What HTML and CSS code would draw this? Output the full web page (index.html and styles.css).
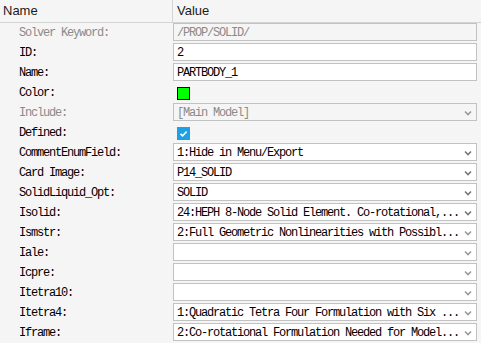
FILE: index.html
```html
<!DOCTYPE html>
<html>
<head>
  <title>Property Editor</title>
  <link rel="stylesheet" href="styles.css">
</head>
<body>
  <div class="grid">
    <div class="head">
      <div class="head-name">Name</div>
      <div class="head-value">Value</div>
    </div>

    <div class="row">
      <div class="label off">Solver Keyword:</div>
      <div class="field off">/PROP/SOLID/</div>
    </div>
    <div class="row">
      <div class="label">ID:</div>
      <div class="field">2</div>
    </div>
    <div class="row">
      <div class="label">Name:</div>
      <div class="field">PARTBODY_1</div>
    </div>
    <div class="row">
      <div class="label">Color:</div>
      <div class="plain"><span class="swatch"></span></div>
    </div>
    <div class="row">
      <div class="label off">Include:</div>
      <div class="field select off"><span>[Main Model]</span><svg class="arrow" width="8" height="6" viewBox="0 0 8 6"><path d="M1 1.5 L4 4.5 L7 1.5" fill="none" stroke="#999" stroke-width="1.6"/></svg></div>
    </div>
    <div class="row">
      <div class="label">Defined:</div>
      <div class="plain"><span class="check"><svg width="13" height="13" viewBox="0 0 13 13"><path d="M3.5 6.8 L5.6 8.8 L9.6 4.6" fill="none" stroke="#fff" stroke-width="1.6"/></svg></span></div>
    </div>
    <div class="row">
      <div class="label">CommentEnumField:</div>
      <div class="field select"><span>1:Hide in Menu/Export</span><svg class="arrow" width="8" height="6" viewBox="0 0 8 6"><path d="M1 1.5 L4 4.5 L7 1.5" fill="none" stroke="#777" stroke-width="1.6"/></svg></div>
    </div>
    <div class="row">
      <div class="label">Card Image:</div>
      <div class="field select"><span>P14_SOLID</span><svg class="arrow" width="8" height="6" viewBox="0 0 8 6"><path d="M1 1.5 L4 4.5 L7 1.5" fill="none" stroke="#777" stroke-width="1.6"/></svg></div>
    </div>
    <div class="row">
      <div class="label">SolidLiquid_Opt:</div>
      <div class="field select"><span>SOLID</span><svg class="arrow" width="8" height="6" viewBox="0 0 8 6"><path d="M1 1.5 L4 4.5 L7 1.5" fill="none" stroke="#777" stroke-width="1.6"/></svg></div>
    </div>
    <div class="row">
      <div class="label">Isolid:</div>
      <div class="field select"><span>24:HEPH 8-Node Solid Element. Co-rotational,...</span><svg class="arrow" width="8" height="6" viewBox="0 0 8 6"><path d="M1 1.5 L4 4.5 L7 1.5" fill="none" stroke="#777" stroke-width="1.6"/></svg></div>
    </div>
    <div class="row">
      <div class="label">Ismstr:</div>
      <div class="field select"><span>2:Full Geometric Nonlinearities with Possibl...</span><svg class="arrow" width="8" height="6" viewBox="0 0 8 6"><path d="M1 1.5 L4 4.5 L7 1.5" fill="none" stroke="#999" stroke-width="1.6"/></svg></div>
    </div>
    <div class="row">
      <div class="label">Iale:</div>
      <div class="field select"><span></span><svg class="arrow" width="8" height="6" viewBox="0 0 8 6"><path d="M1 1.5 L4 4.5 L7 1.5" fill="none" stroke="#999" stroke-width="1.6"/></svg></div>
    </div>
    <div class="row">
      <div class="label">Icpre:</div>
      <div class="field select"><span></span><svg class="arrow" width="8" height="6" viewBox="0 0 8 6"><path d="M1 1.5 L4 4.5 L7 1.5" fill="none" stroke="#999" stroke-width="1.6"/></svg></div>
    </div>
    <div class="row">
      <div class="label">Itetra10:</div>
      <div class="field select"><span></span><svg class="arrow" width="8" height="6" viewBox="0 0 8 6"><path d="M1 1.5 L4 4.5 L7 1.5" fill="none" stroke="#999" stroke-width="1.6"/></svg></div>
    </div>
    <div class="row">
      <div class="label">Itetra4:</div>
      <div class="field select"><span>1:Quadratic Tetra Four Formulation with Six ...</span><svg class="arrow" width="8" height="6" viewBox="0 0 8 6"><path d="M1 1.5 L4 4.5 L7 1.5" fill="none" stroke="#999" stroke-width="1.6"/></svg></div>
    </div>
    <div class="row">
      <div class="label">Iframe:</div>
      <div class="field select"><span>2:Co-rotational Formulation Needed for Model...</span><svg class="arrow" width="8" height="6" viewBox="0 0 8 6"><path d="M1 1.5 L4 4.5 L7 1.5" fill="none" stroke="#999" stroke-width="1.6"/></svg></div>
    </div>
  </div>
</body>
</html>
```

FILE: styles.css
```css
body {
  margin: 0;
  padding: 0;
  background-color: #f5f5f5;
  font-family: "Liberation Mono", monospace;
  font-size: 12px;
  letter-spacing: -1.2px;
  color: #000;
  overflow: hidden;
}

.grid {
  width: 481px;
}

.head {
  display: flex;
  height: 22px;
  border-bottom: 1px solid #d4d4d4;
  font-family: "Liberation Sans", sans-serif;
  font-size: 13px;
  letter-spacing: 0;
  color: #1a1a1a;
}

.head-name {
  width: 169px;
  padding-left: 3px;
  line-height: 21px;
  border-right: 1px solid #d4d4d4;
}

.head-value {
  padding-left: 4px;
  line-height: 21px;
}

.row {
  display: flex;
  height: 20px;
  align-items: flex-start;
}

.label {
  width: 154px;
  padding-left: 19px;
  line-height: 20px;
  white-space: nowrap;
}

.label.off {
  color: #8a8a8a;
}

.field {
  display: flex;
  align-items: center;
  box-sizing: border-box;
  width: 304px;
  height: 18px;
  margin-top: 0;
  padding: 1px 3px 0 3px;
  border: 1px solid #c2c2c2;
  background-color: #fff;
  white-space: nowrap;
  overflow: hidden;
}

.field.off {
  background-color: #f5f5f5;
  color: #8a8a8a;
}

.field span {
  flex: 1;
}

.arrow {
  flex: none;
  margin-right: 1px;
}

.plain {
  height: 20px;
  display: flex;
  align-items: center;
  padding-left: 4px;
}

.swatch {
  display: block;
  width: 11px;
  height: 11px;
  margin-top: 1px;
  border: 1px solid #000;
  background-color: #00ff00;
}

.check {
  display: block;
  width: 13px;
  height: 13px;
  background-color: #1aa1e6;
}

.check svg {
  display: block;
}
```
